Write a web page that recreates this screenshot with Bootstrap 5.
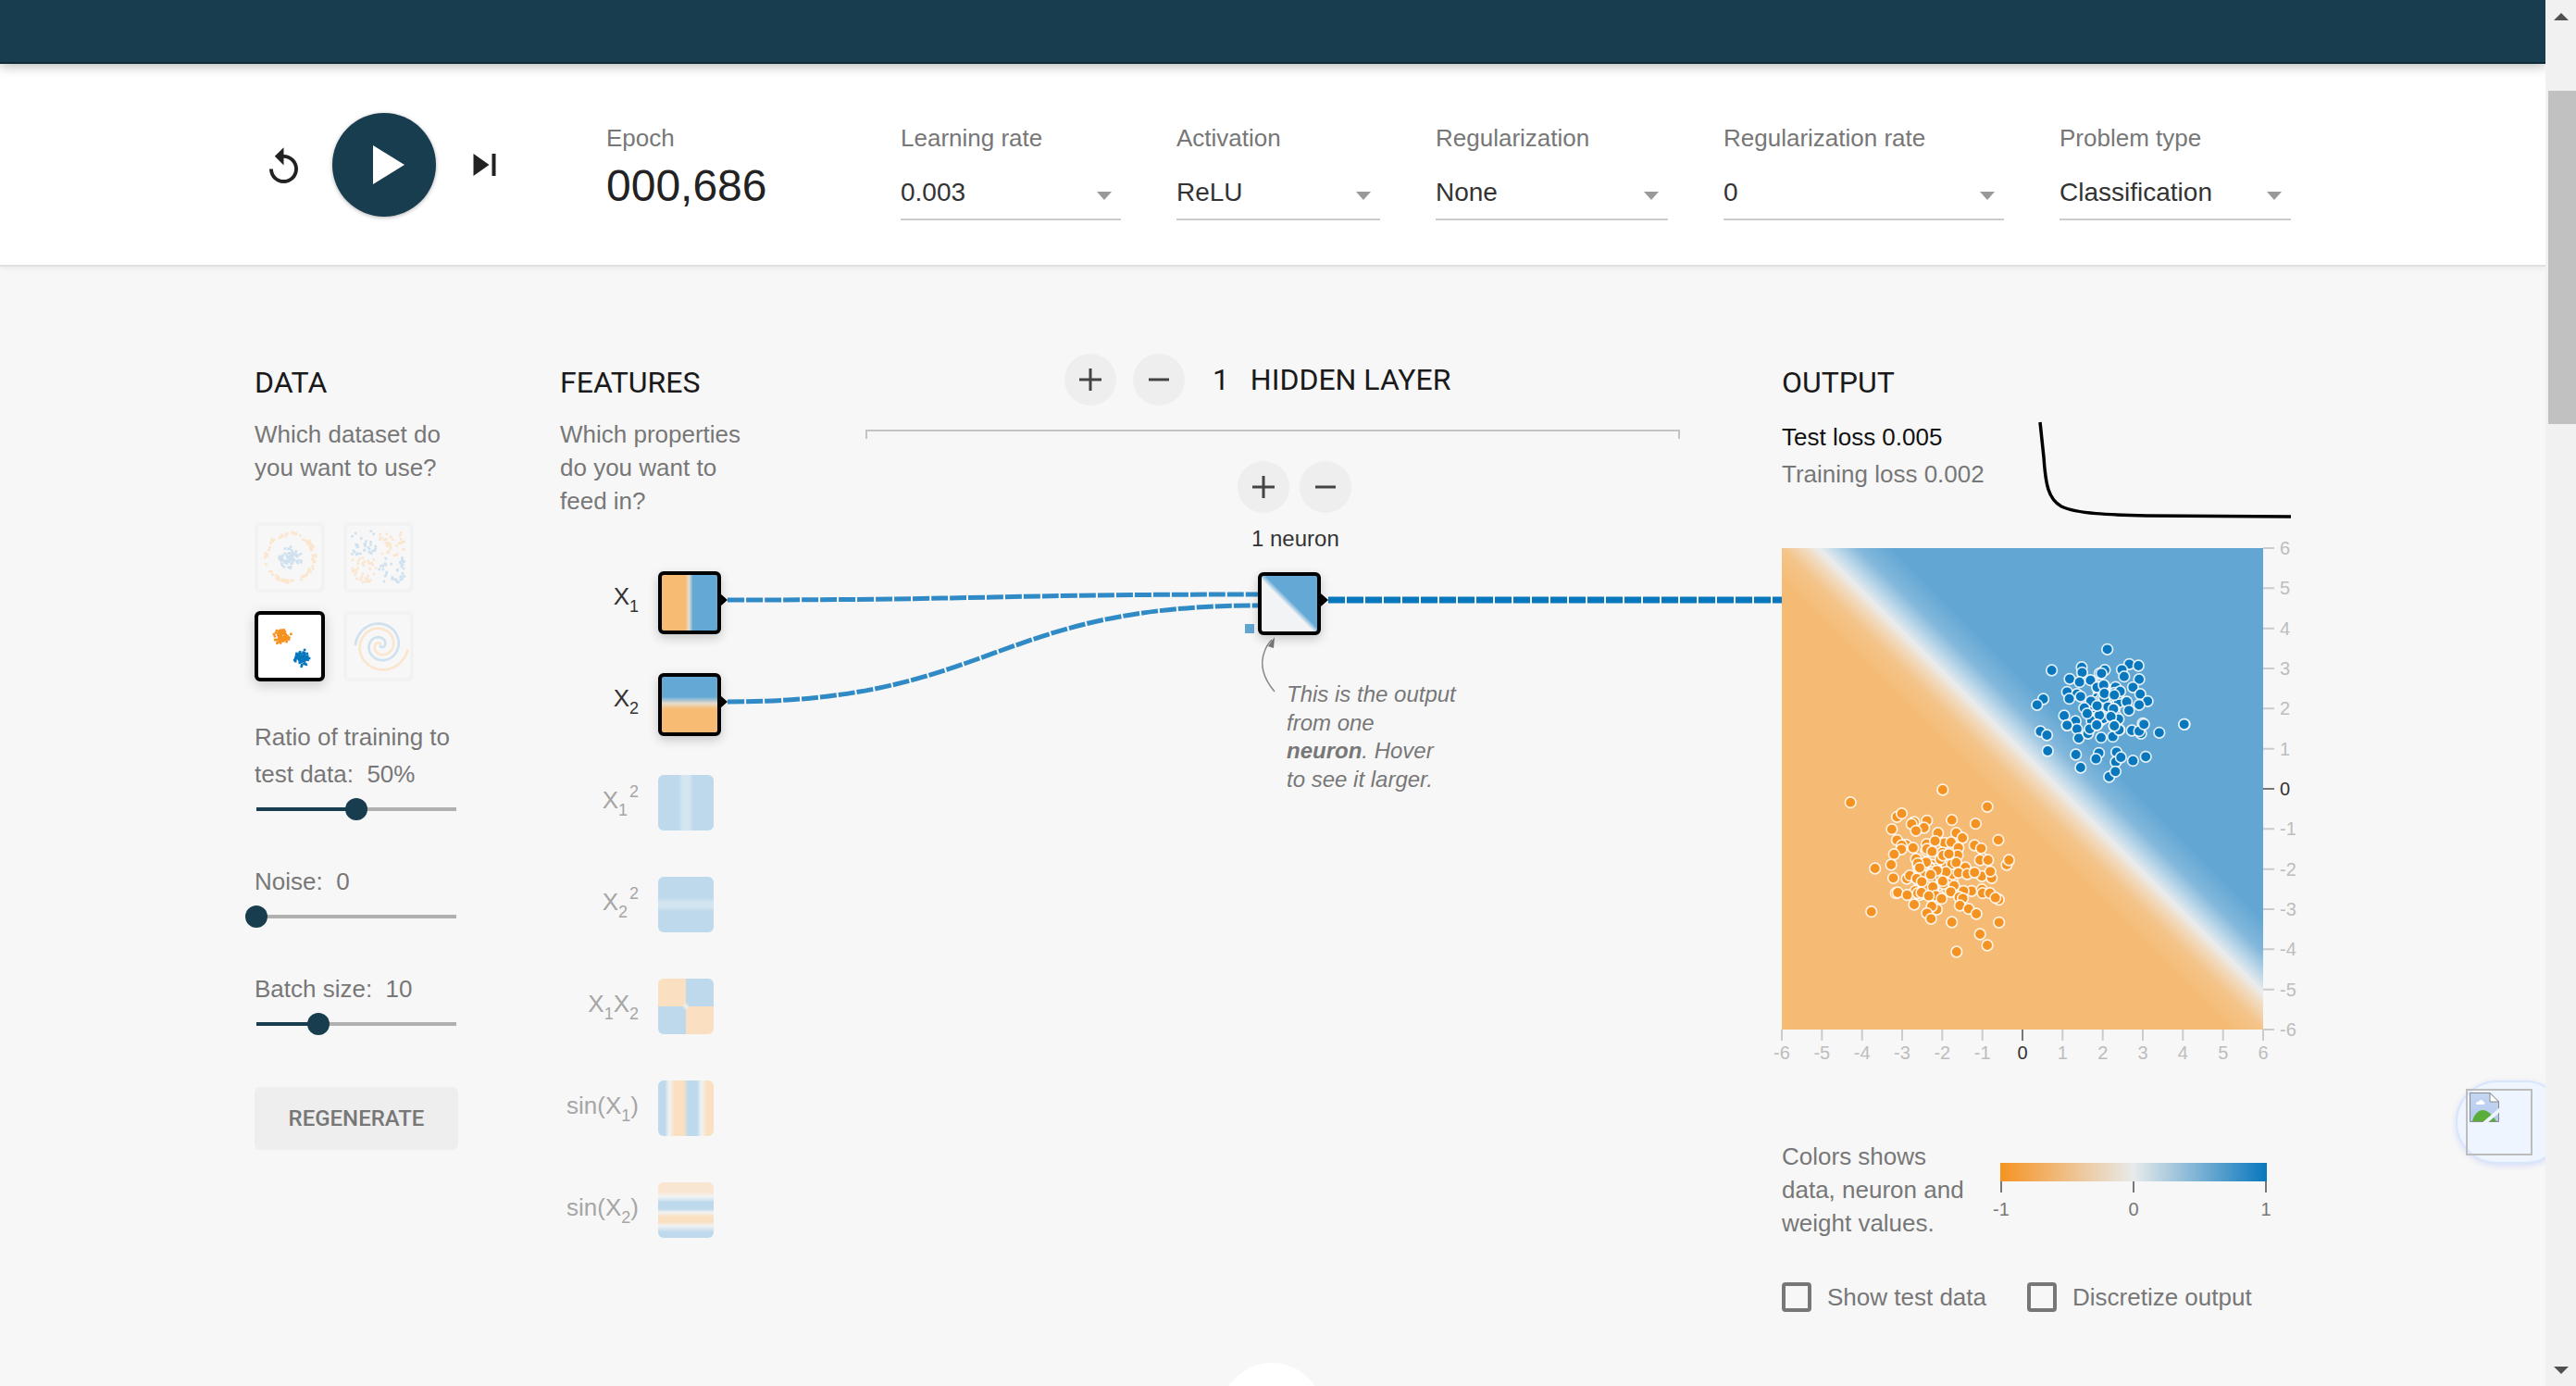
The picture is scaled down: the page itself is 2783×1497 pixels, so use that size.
<!doctype html>
<html lang="en"><head><meta charset="utf-8"><title>Neural network playground</title>
<link href="https://cdn.jsdelivr.net/npm/bootstrap@5.3.0/dist/css/bootstrap.min.css" rel="stylesheet">
<style>
html,body{height:1497px;overflow:hidden;background:#f7f7f7;margin:0}
body{font-family:"Liberation Sans",Arial,sans-serif;font-size:26px;line-height:36px;color:#777;display:flex}
.pg{width:2750px;height:1497px;position:relative;overflow:hidden;flex:none}
.sbar{width:33px;height:1497px;background:#f1f1f1;flex:none;display:flex;flex-direction:column;align-items:center;position:relative}
.sarrow{width:0;height:0;border-left:8px solid transparent;border-right:8px solid transparent;margin-top:14px;border-bottom:8px solid #505050}
.sthumb{width:30px;height:360px;background:#c1c1c1;margin-top:76px;margin-left:2px}
.sarrow2{position:absolute;top:1476px;width:0;height:0;border-left:8px solid transparent;border-right:8px solid transparent;border-top:8px solid #505050}
.topbar{height:69px;background:#183d4e;border-bottom:2px solid #0e2b38;box-shadow:0 2px 12px rgba(0,0,0,.3);position:relative;z-index:3}
.ctrl{height:219px;background:#fff;border-bottom:2px solid #e0e0e0;box-shadow:0 2px 6px rgba(0,0,0,.06);position:relative;z-index:2}
.wrap{width:2200px;margin-left:275px}
.playgrp{width:380px;padding:53px 0 0 16px;height:165px}
.playbtn{width:112px;height:112px;background:#183d4e;border:0;margin:0 40px 0 37px;padding:0 0 0 10px;box-shadow:0 1px 4px rgba(0,0,0,.3)}
.playbtn:hover{background:#183d4e}
.fld{padding-top:62px}
.fld label,.fldlab{display:block;line-height:36px;color:#777;font-size:26px}
.epoch{width:318px}
.epochval{font-size:48px;line-height:56px;color:#222;margin-top:6px}
.selwrap{position:relative;margin-top:13px}
.selwrap::after{content:"";position:absolute;right:10px;bottom:22px;border-left:8px solid transparent;border-right:8px solid transparent;border-top:9px solid #999}
.plsel.form-select{font-family:inherit;font-size:28px;line-height:40px;height:58px;padding:8px 0 8px;border:0;border-bottom:2px solid #ccc;border-radius:0;background:transparent none;color:#333;box-shadow:none;appearance:none}
.w1{width:238px}.w2{width:220px}.w3{width:251px}.w4{width:303px}.w5{width:250px}
.mainrow{position:relative;padding-top:94px;height:1209px}
.netlay{position:absolute;left:0;top:0;width:2200px;height:1209px;pointer-events:none}
.hd{font-family:Roboto,sans-serif;font-weight:400;font-size:32px;line-height:40px;color:#1a1a1a;margin:11px 0 18px;text-transform:uppercase}
.c1{width:330px}.c2{width:330px}.c3{width:880px}.c4{width:550px;margin-left:110px}
.c4 .hd{margin-bottom:19px}
.thumbs{display:grid;grid-template-columns:76px 76px;gap:20px;margin:41px 0 40px}
.thumb{width:76px;height:76px;border:4px solid #f2f2f2;border-radius:6px;background:#f7f7f7}
.thumb svg{display:block;width:68px;height:68px}
.thumb.on{border-color:#000;background:#fff;box-shadow:0 4px 14px rgba(0,0,0,.18)}
.ln{line-height:40px}
.sld{display:flex;align-items:center;height:24px;width:216px;margin:6px 0 46px 2px}
.sfill{height:4px;background:#183d4e}
.srest{height:4px;background:#b0b0b0;flex:1}
.knob{width:24px;height:24px;border-radius:50%;background:#183d4e;margin:0 -12px;position:relative;z-index:1;flex:none}
.regen{width:220px;height:68px;background:#eee;border:0;border-radius:6px;font-family:Roboto,sans-serif;font-weight:500;font-size:24px;color:#777;margin-top:10px;padding:0}
.regen:hover{background:#eee;color:#777}
.nlist{margin-top:58px}
.nrow{display:flex;height:110px}
.nlab{width:85px;margin-right:21px;text-align:right;line-height:55px;font-size:26px;color:#a6a6a6;white-space:nowrap}
.nlab.act{color:#333}
.nlab sub,.nlab sup{font-size:18px;line-height:0;position:relative}
.nlab sub{bottom:-8px}
.nlab sup{top:-12px;margin-left:2px}
.nbox{width:60px;height:60px;border-radius:6px;position:relative;z-index:1;flex:none}
.nbox.on{width:68px;height:68px;border:4px solid #000;box-shadow:0 4px 12px rgba(0,0,0,.2)}
.g1{background:linear-gradient(90deg,#f7bb73 0 42%,#e5ddd0 49%,#64a9d6 56%)}
.g2{background:linear-gradient(180deg,#64a9d6 0 36%,#e8dccb 48%,#f7bb73 58%)}
.g3{background:linear-gradient(90deg,#bed9ec 0 36%,#d3e5f0 44% 56%,#bed9ec 64%)}
.g4{background:linear-gradient(180deg,#bed9ec 0 38%,#d3e5f0 46% 54%,#bed9ec 62%)}
.g5{background:radial-gradient(circle at 50% 50%,#f3f3f1 0,rgba(243,243,241,0) 10%),conic-gradient(#bed9ec 0 25%,#fae0c1 0 50%,#bed9ec 0 75%,#fae0c1 0)}
.g6{background:linear-gradient(90deg,#bed9ec 0 12%,#f1f3f3 20%,#fae0c1 30% 46%,#bed9ec 54% 70%,#f1f3f3 78%,#fae0c1 88%)}
.g7{background:linear-gradient(180deg,#fae6d0 0 16%,#f1f3f3 26%,#bed9ec 36% 48%,#f1f3f3 54%,#fae0c1 62% 72%,#f1f3f3 78%,#bed9ec 90%)}
.g8{background:linear-gradient(to top right,#f1f3f4 0 46.5%,#64a9d6 53.5%)}
.lyrhd{display:flex;align-items:center;padding-left:215px;height:56px}
.nbtn{width:56px;height:56px;border-radius:50%;background:#eee;border:0;padding:0;display:flex;align-items:center;justify-content:center;flex:none}
.nbtn:hover{background:#eee}
.rmlayer{margin-left:18px}
.lyrtxt{font-family:Roboto,sans-serif;font-size:32px;line-height:40px;color:#1a1a1a;margin-left:30px;text-transform:uppercase;white-space:pre}
.lyrtxt span{margin-left:7px}
.brkt{height:10px;border:2px solid #c4c4c4;border-bottom:0;margin-top:26px}
.nbtns{display:flex;gap:10.5px;margin:24px 0 0 402px}
.ncount{font-size:24px;line-height:32px;color:#333;margin:12px 0 20px 417px}
.nbox.mid{margin-left:424px}
.anno{font-size:24px;line-height:30.6px;font-style:italic;color:#777;margin:49px 0 0 455px;white-space:nowrap}
.anno b{font-weight:700}
.lossrow{display:flex;justify-content:space-between;height:80px}
.lossrow .ln{white-space:nowrap}
.tl{color:#111}
.lossrow svg{margin-top:4px;overflow:visible;flex:none}
.plot{width:520px;height:520px;position:relative;margin-top:60px;background:linear-gradient(45deg,#f5bb75 0 46.5%,#f4c48a 50%,#f1dcc2 52.4%,#ebeced 53.8%,#bcd7e9 55.6%,#82b7db 58%,#62a7d4 61.5%)}
.plot svg{position:absolute;left:0;top:0;overflow:visible}
.legend{display:flex;margin-top:119px}
.legtxt{width:236px;white-space:nowrap}
.scale{width:288px;margin-top:25px}
.sbarg{height:20px;background:linear-gradient(90deg,#f59322,#e8eaeb 50%,#0877bd)}
.sticks{display:flex;justify-content:space-between}
.stick{width:2px;display:flex;flex-direction:column;align-items:center;font-size:20px;line-height:24px;color:#777}
.stick i{display:block;width:2px;height:12px;background:#777;flex:none;margin-bottom:6px}
.chks{display:flex;margin-top:46px}
.chk{display:flex;align-items:center;gap:17px;height:32px;margin:0;white-space:nowrap}
.chk .form-check-input{width:32px;height:32px;margin:0;border:4px solid #777;border-radius:4px;background-color:transparent;flex:none}
.chk+.chk{margin-left:44px}
.wdg{position:absolute;left:2653px;top:1167px;width:120px;height:90px;border-radius:45px;background:#eef5fe;border:2px solid #d8e6fd;box-shadow:0 2px 6px rgba(120,140,250,.25)}
.wdgbox{position:absolute;left:2664px;top:1176px;width:72px;height:72px;border:2px solid #bdbdbd;padding:2px}
.wdgbox svg{display:block}
.fab{position:absolute;left:1318px;top:1472px;width:112px;height:112px;border-radius:50%;background:#fff}
</style></head><body>
<div class="pg">
<header class="topbar"></header>
<section class="ctrl"><div class="wrap d-flex">
  <div class="playgrp d-flex align-items-center">
    <svg width="31" height="39" viewBox="4 1 16 20" fill="#222"><path d="M12 5V1L7 6l5 5V7c3.31 0 6 2.69 6 6s-2.69 6-6 6-6-2.69-6-6H4c0 4.42 3.58 8 8 8s8-3.58 8-8-3.58-8-8-8z"/></svg>
    <button class="btn rounded-circle playbtn d-flex align-items-center justify-content-center" aria-label="play"><svg width="34" height="42" viewBox="0 0 34 42"><path fill="#fff" d="M0 0l34 21L0 42z"/></svg></button>
    <svg width="25" height="24" viewBox="6 6 12 12" fill="#222"><path d="M6 18l8.5-6L6 6v12zM16 6v12h2V6h-2z"/></svg>
  </div>
  <div class="fld epoch"><div class="fldlab">Epoch</div><div class="epochval">000,686</div></div>
  <div class="d-flex" style="gap:60px">
    <div class="fld w1"><label>Learning rate</label><div class="selwrap"><select class="form-select plsel"><option>0.003</option><option>0.01</option><option>0.1</option></select></div></div>
    <div class="fld w2"><label>Activation</label><div class="selwrap"><select class="form-select plsel"><option>ReLU</option><option>Tanh</option><option>Sigmoid</option></select></div></div>
    <div class="fld w3"><label>Regularization</label><div class="selwrap"><select class="form-select plsel"><option>None</option><option>L1</option><option>L2</option></select></div></div>
    <div class="fld w4"><label>Regularization rate</label><div class="selwrap"><select class="form-select plsel"><option>0</option><option>0.001</option></select></div></div>
    <div class="fld w5"><label>Problem type</label><div class="selwrap"><select class="form-select plsel"><option>Classification</option><option>Regression</option></select></div></div>
  </div>
</div></section>
<main class="wrap mainrow d-flex">
  <svg class="netlay" viewBox="275 288 2200 1209" fill="none">
    <path d="M786 648C1072 648 1072 642 1359 642" stroke="#2f8ac6" stroke-width="5" stroke-dasharray="18 2"/>
    <path d="M786 758C1072 758 1072 654 1359 654" stroke="#2f8ac6" stroke-width="5" stroke-dasharray="18 2"/>
    <path d="M1435 648H1925" stroke="#0877bd" stroke-width="7" stroke-dasharray="18 2"/>
    <rect x="1345" y="674" width="10" height="10" fill="#61a6d3"/>
    <path d="M778 641l8 7-8 7zM778 751l8 7-8 7zM1427 641l8 7-8 7z" fill="#000"/>
    <path d="M1377 747C1366 734 1360 720 1366 704C1368 698 1371 694 1374 691" stroke="#888" stroke-width="1.5"/>
    <path d="M1377 688L1370 698L1376 700z" fill="#777"/>
  </svg>
  <div class="c1">
    <h4 class="hd">Data</h4>
    <div>Which dataset do<br>you want to use?</div>
    <div class="thumbs">
      <div class="thumb"><svg id="t1" viewBox="0 0 68 68"></svg></div>
      <div class="thumb"><svg id="t2" viewBox="0 0 68 68"></svg></div>
      <div class="thumb on"><svg id="t3" viewBox="0 0 68 68"></svg></div>
      <div class="thumb"><svg id="t4" viewBox="0 0 68 68" fill="none"></svg></div>
    </div>
    <div class="ln">Ratio of training to<br>test data:&nbsp; 50%</div>
    <div class="sld"><div class="sfill" style="width:108px"></div><div class="knob"></div><div class="srest"></div></div>
    <div class="ln">Noise:&nbsp; 0</div>
    <div class="sld"><div class="sfill" style="width:0"></div><div class="knob"></div><div class="srest"></div></div>
    <div class="ln">Batch size:&nbsp; 10</div>
    <div class="sld"><div class="sfill" style="width:67px"></div><div class="knob"></div><div class="srest"></div></div>
    <button class="btn regen">REGENERATE</button>
  </div>
  <div class="c2">
    <h4 class="hd">Features</h4>
    <div>Which properties<br>do you want to<br>feed in?</div>
    <div class="nlist">
      <div class="nrow"><div class="nlab act">X<sub>1</sub></div><div class="nbox on g1"></div></div>
      <div class="nrow"><div class="nlab act">X<sub>2</sub></div><div class="nbox on g2"></div></div>
      <div class="nrow"><div class="nlab">X<sub>1</sub><sup>2</sup></div><div class="nbox g3"></div></div>
      <div class="nrow"><div class="nlab">X<sub>2</sub><sup>2</sup></div><div class="nbox g4"></div></div>
      <div class="nrow"><div class="nlab">X<sub>1</sub>X<sub>2</sub></div><div class="nbox g5"></div></div>
      <div class="nrow"><div class="nlab">sin(X<sub>1</sub>)</div><div class="nbox g6"></div></div>
      <div class="nrow"><div class="nlab">sin(X<sub>2</sub>)</div><div class="nbox g7"></div></div>
    </div>
  </div>
  <div class="c3">
    <div class="lyrhd">
      <button class="btn nbtn" aria-label="add layer"><svg width="24" height="24" viewBox="0 0 24 24" fill="#444"><path d="M10.5 0h3v24h-3zM0 10.5h24v3H0z"/></svg></button>
      <button class="btn nbtn rmlayer" aria-label="remove layer"><svg width="24" height="24" viewBox="0 0 24 24" fill="#444"><path d="M1 10.5h22v3H1z"/></svg></button>
      <div class="lyrtxt">1&nbsp; <span>Hidden layer</span></div>
    </div>
    <div class="brkt"></div>
    <div class="nbtns">
      <button class="btn nbtn" aria-label="add neuron"><svg width="24" height="24" viewBox="0 0 24 24" fill="#444"><path d="M10.5 0h3v24h-3zM0 10.5h24v3H0z"/></svg></button>
      <button class="btn nbtn" aria-label="remove neuron"><svg width="24" height="24" viewBox="0 0 24 24" fill="#444"><path d="M1 10.5h22v3H1z"/></svg></button>
    </div>
    <div class="ncount">1 neuron</div>
    <div class="nbox on mid g8"></div>
    <div class="anno">This is the output<br>from one<br><b>neuron</b>. Hover<br>to see it larger.</div>
  </div>
  <div class="c4">
    <h4 class="hd">Output</h4>
    <div class="lossrow">
      <div><div class="ln tl">Test loss 0.005</div><div class="ln">Training loss 0.002</div></div>
      <svg width="272" height="104" viewBox="2204 457 272 104" fill="none"><path d="M2205 457L2209 495C2211 525 2214 540 2228 548C2245 556 2280 557 2320 558L2476 559" stroke="#000" stroke-width="3.5"/></svg>
    </div>
    <div class="plot"><svg id="plot" width="520" height="520" viewBox="1925 593 520 520" font-family="Liberation Sans" font-size="20">
      <g stroke="#ccc" stroke-width="2"><path d="M2445 593h12M2445 636.3h12M2445 679.7h12M2445 723h12M2445 766.3h12M2445 809.7h12M2445 896.3h12M2445 939.7h12M2445 983h12M2445 1026.3h12M2445 1069.7h12M2445 1113h12"/><path d="M1925 1113v12M1968.3 1113v12M2011.7 1113v12M2055 1113v12M2098.3 1113v12M2141.7 1113v12M2228.3 1113v12M2271.7 1113v12M2315 1113v12M2358.3 1113v12M2401.7 1113v12M2445 1113v12"/></g>
      <path d="M2445 853h12M2185 1113v12" stroke="#777" stroke-width="2"/>
      <g fill="#bdbdbd"><text x="2463" y="600">6</text><text x="2463" y="643">5</text><text x="2463" y="687">4</text><text x="2463" y="730">3</text><text x="2463" y="773">2</text><text x="2463" y="817">1</text><text x="2463" y="903">-1</text><text x="2463" y="947">-2</text><text x="2463" y="990">-3</text><text x="2463" y="1033">-4</text><text x="2463" y="1077">-5</text><text x="2463" y="1120">-6</text></g>
      <text x="2463" y="860" fill="#333">0</text>
      <g fill="#bdbdbd" text-anchor="middle"><text x="1925" y="1145">-6</text><text x="1968.3" y="1145">-5</text><text x="2011.7" y="1145">-4</text><text x="2055" y="1145">-3</text><text x="2098.3" y="1145">-2</text><text x="2141.7" y="1145">-1</text><text x="2228.3" y="1145">1</text><text x="2271.7" y="1145">2</text><text x="2315" y="1145">3</text><text x="2358.3" y="1145">4</text><text x="2401.7" y="1145">5</text><text x="2445" y="1145">6</text></g>
      <text x="2185" y="1145" fill="#333" text-anchor="middle">0</text>
    </svg></div>
    <div class="legend">
      <div class="legtxt">Colors shows<br>data, neuron and<br>weight values.</div>
      <div class="scale"><div class="sbarg"></div><div class="sticks">
        <div class="stick"><i></i><span>-1</span></div><div class="stick"><i></i><span>0</span></div><div class="stick"><i></i><span>1</span></div>
      </div></div>
    </div>
    <div class="chks">
      <label class="chk"><input type="checkbox" class="form-check-input">Show test data</label>
      <label class="chk"><input type="checkbox" class="form-check-input">Discretize output</label>
    </div>
  </div>
</main>
<div class="fab"></div>
<div class="wdg"></div>
<div class="wdgbox"><svg width="32" height="32" viewBox="0 0 32 32"><defs><linearGradient id="sky" x1="0" y1="0" x2="0" y2="1"><stop offset="0" stop-color="#c5d6f2"/><stop offset="1" stop-color="#b4c9ee"/></linearGradient></defs><path d="M.5.5H22L31.5 10V31.5H.5z" fill="url(#sky)" stroke="#8a8a8a"/><path d="M22 .5V10h9.5z" fill="#fff" stroke="#8a8a8a"/><path d="M3 31C5 23 10 19 14 19C20 19 25 25 29 31z" fill="#5bad3a"/><path d="M7 12c0-2 2-2 3-2 0-2 4-3 5 0 2 0 2 3 0 3H8c-1 0-1-1-1-1z" fill="#fff"/><path d="M12 34L33 16v5L18 34z" fill="#eef5fe"/></svg></div>
</div>
<aside class="sbar"><div class="sarrow"></div><div class="sthumb"></div><div class="sarrow2"></div></aside>
<script>
var NS='http://www.w3.org/2000/svg';
function el(p,n,a){var e=document.createElementNS(NS,n);for(var k in a)e.setAttribute(k,a[k]);p.appendChild(e);return e}
var seed=12345;function R(){seed=(seed*16807)%2147483647;return seed/2147483647}
function G(){return (R()+R()+R()+R()-2)*0.87}
function sq(s,x,y,c){el(s,'rect',{x:x,y:y,width:2.6,height:2.6,fill:c})}
var O='#f59322',B='#0877bd',PO='#fbe5cd',PB='#cfe1ee';
var t1=document.getElementById('t1'),t2=document.getElementById('t2'),t3=document.getElementById('t3'),t4=document.getElementById('t4');
for(var i=0;i<90;i++){var a=R()*6.283,r=24+R()*4;sq(t1,34+r*Math.cos(a)-1,34+r*Math.sin(a)-1,PO)}
for(i=0;i<80;i++){a=R()*6.283;r=R()*13;sq(t1,34+r*Math.cos(a)-1,35+r*Math.sin(a)-1,PB)}
for(i=0;i<150;i++){var x=4+R()*57,y=4+R()*57;if(Math.abs(x-32)<1||Math.abs(y-32)<1)continue;sq(t2,x,y,(x<32)==(y<32)?PB:PO)}
for(i=0;i<80;i++){sq(t3,24+G()*7,22+G()*7,O)}
for(i=0;i<80;i++){sq(t3,46+G()*7,45+G()*7,B)}
function spiral(s,a0,r0,c){var d='';for(var i=0;i<=120;i++){var q=i/120,r=r0*(1-q),th=a0+q*11.5;d+=(i?'L':'M')+(36+r*Math.cos(th)).toFixed(1)+' '+(33+r*Math.sin(th)).toFixed(1)}el(s,'path',{d:d,stroke:c,'stroke-width':2.6,fill:'none'})}
spiral(t4,3.14,27,'#cfe1ee');spiral(t4,0.15,30,'#fbe5cd');
var plot=document.getElementById('plot');
function dot(x,y,c){el(plot,'circle',{cx:x,cy:y,r:5.8,fill:c,stroke:'#fff','stroke-width':1.7,'stroke-opacity':.85})}
for(i=0;i<45;i++){dot(2090+G()*22,947+G()*22,O)}
for(i=0;i<45;i++){dot(2272+G()*20,763+G()*20,B)}
function dots(list,c,oy){for(var i=0;i<list.length;i+=2){dot(1900+list[i]/2.53,oy+list[i+1]/3,c)}}
dots([251,263,503,222,625,277,378,310,391,299,425,327,418,333,460,322,452,345,430,355,364,350,528,320,593,332,490,362,540,362,557,378,378,385,403,400,391,402,390,415,422,410,459,398,508,394,482,388,526,392,460,414,546,410,590,402,608,412,655,385,474,422,502,425,370,431,430,446,458,457,435,460,497,448,544,434,504,435,612,445,605,450,627,450,678,465,684,450,362,465,318,477,528,463,540,458,565,474,512,488,487,484,445,495,405,510,413,500,368,508,432,510,546,491,570,495,610,502,637,508,633,487,446,520,503,518,470,497,534,533,476,537,582,550,560,550,610,545,612,557,632,557,656,578,647,572,375,557,380,555,406,563,435,557,445,555,484,565,465,566,525,553,548,570,558,574,425,594,550,597,487,610,473,600,574,608,595,624,460,622,471,640,528,651,657,652,605,690,625,726,541,747,308,617,440,475,520,430,590,490,500,575],O,780);
dots([953,997,801,1065,883,1055,946,1064,932,1075,884,1072,937,1075,1013,1045,1038,1050,993,1063,999,1085,1040,1094,850,1093,877,1103,907,1097,925,1120,943,1113,1023,1120,843,1135,870,1142,988,1133,945,1140,972,1145,1043,1142,880,1150,849,1157,778,1158,761,1177,908,1165,1063,1165,1006,1167,1040,1177,925,1180,890,1187,970,1190,1012,1195,835,1212,866,1230,898,1205,963,1215,1050,1237,1164,1240,924,1242,972,1245,843,1243],B,370);
dots([770,33,788,45,870,25,843,13,875,55,900,40,905,25,924,12,936,53,968,50,985,28,972,15,1020,30,1045,40,1040,32,1095,37,1053,10,1163,10,790,96,867,108,930,103,922,122,978,100,976,132,990,117,1023,128,1058,115,880,150,958,180,975,163],B,780);
</script>
</body></html>
